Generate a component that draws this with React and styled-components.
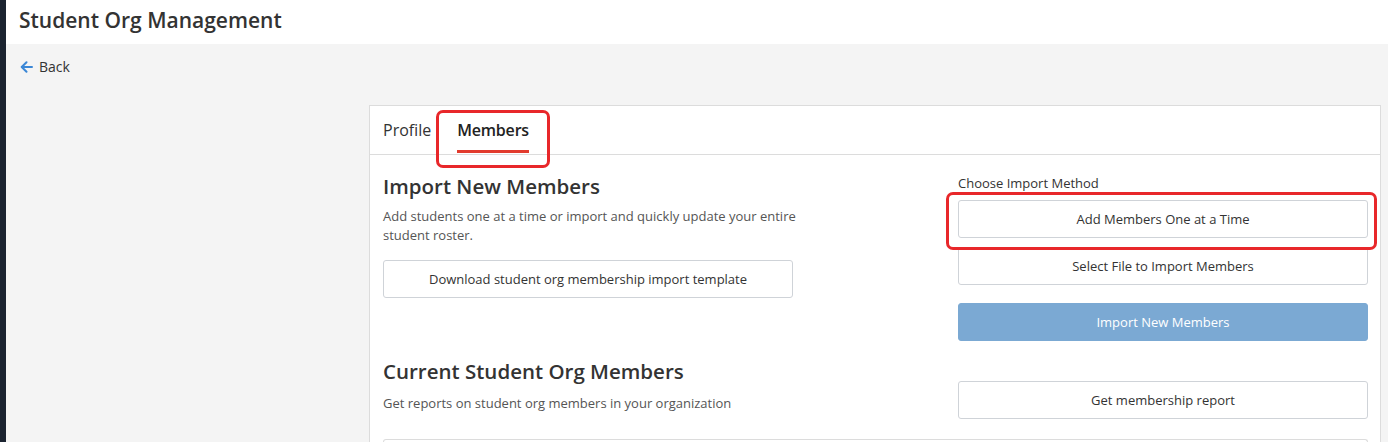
import React from 'react';
import styled, { createGlobalStyle } from 'styled-components';

const GlobalStyle = createGlobalStyle`
  html, body {
    margin: 0;
    padding: 0;
    background: #f4f4f4;
    font-family: "Open Sans", "Liberation Sans", sans-serif;
    color: #333;
  }
  * { box-sizing: border-box; }
`;

const Shell = styled.div`
  display: flex;
  width: 1388px;
  height: 442px;
  overflow: hidden;
`;

const Rail = styled.div`
  width: 6px;
  flex: none;
  background: #1b2330;
`;

const Main = styled.div`
  flex: 1;
  display: flex;
  flex-direction: column;
  background: #f4f4f4;
`;

const Header = styled.header`
  height: 44px;
  flex: none;
  display: flex;
  align-items: center;
  padding: 0 0 4px 13px;
  background: #fff;
`;

const Title = styled.h1`
  margin: 0;
  font-size: 21px;
  font-weight: 600;
  color: #333;
`;

const Content = styled.div`
  padding: 0 7px 0 363px;
  position: relative;
`;

const BackLink = styled.a`
  position: absolute;
  left: 14px;
  top: 13px;
  display: flex;
  align-items: center;
  gap: 6px;
  font-size: 14px;
  color: #333;
  text-decoration: none;
`;

const Card = styled.section`
  position: relative;
  margin-top: 61px;
  background: #fff;
  border: 1px solid #dcdcdc;
`;

const Tabs = styled.nav`
  height: 49px;
  display: flex;
  gap: 26px;
  padding: 0 13px;
  border-bottom: 1px solid #dcdcdc;
`;

const Tab = styled.div`
  position: relative;
  display: flex;
  align-items: center;
  font-size: 16px;
  font-weight: ${p => (p.$active ? 600 : 400)};
  letter-spacing: ${p => (p.$active ? '-0.2px' : '0')};
  color: ${p => (p.$active ? '#222' : '#333')};

  ${p => p.$active && `
    &::after {
      content: '';
      position: absolute;
      left: 0;
      right: 0;
      bottom: 1px;
      height: 3px;
      background: #e23b2e;
    }
  `}
`;

const Body = styled.div`
  padding: 0 12px 0 13px;
`;

const Row = styled.div`
  display: grid;
  grid-template-columns: 1fr 410px;
  column-gap: 40px;
  padding-top: ${p => p.$top}px;
`;

const Col = styled.div`
  display: flex;
  flex-direction: column;
`;

const Heading = styled.h2`
  margin: ${p => p.$mt || 0}px 0 0;
  font-size: 20.5px;
  font-weight: 600;
  line-height: 26px;
  color: #333;
`;

const Desc = styled.p`
  margin: ${p => p.$mt}px 0 0;
  max-width: 420px;
  font-size: 13px;
  line-height: 19px;
  color: #555;
`;

const Label = styled.div`
  margin-top: 1px;
  font-size: 13px;
  line-height: 16px;
  color: #333;
`;

const Button = styled.button`
  width: 410px;
  height: 38px;
  margin-top: ${p => p.$mt || 0}px;
  border: 1px solid ${p => (p.$primary ? '#7ba9d3' : '#cfd3d8')};
  border-radius: 3px;
  background: ${p => (p.$primary ? '#7ba9d3' : '#fff')};
  color: ${p => (p.$primary ? '#fff' : '#333')};
  font-family: inherit;
  font-size: 13px;
  cursor: pointer;
`;

const NextBox = styled.div`
  margin-top: 20px;
  height: 10px;
  border: 1px solid #dcdcdc;
  border-bottom: none;
  border-radius: 3px 3px 0 0;
`;

const Callout = styled.div`
  position: absolute;
  left: ${p => p.$x}px;
  top: ${p => p.$y}px;
  width: ${p => p.$w}px;
  height: ${p => p.$h}px;
  border: 3px solid #e8272a;
  border-radius: 7px;
  pointer-events: none;
`;

function ArrowLeft() {
  return (
    <svg width="13" height="12" viewBox="0 0 13 12" fill="none">
      <path d="M12 6H2M6.5 1.2L1.7 6l4.8 4.8" stroke="#3b87d6" strokeWidth="2" strokeLinecap="round" strokeLinejoin="round" />
    </svg>
  );
}

export default function App() {
  return (
    <>
      <GlobalStyle />
      <Shell>
        <Rail />
        <Main>
          <Header>
            <Title>Student Org Management</Title>
          </Header>
          <Content>
            <BackLink href="#">
              <ArrowLeft />
              Back
            </BackLink>
            <Card>
              <Tabs>
                <Tab>Profile</Tab>
                <Tab $active>Members</Tab>
              </Tabs>
              <Body>
                <Row $top={19}>
                  <Col>
                    <Heading $mt={-1}>Import New Members</Heading>
                    <Desc $mt={8}>
                      Add students one at a time or import and quickly update your entire student roster.
                    </Desc>
                    <Button $mt={15}>Download student org membership import template</Button>
                  </Col>
                  <Col>
                    <Label>Choose Import Method</Label>
                    <Button $mt={9}>Add Members One at a Time</Button>
                    <Button $mt={9}>Select File to Import Members</Button>
                    <Button $primary $mt={18}>Import New Members</Button>
                  </Col>
                </Row>
                <Row $top={17}>
                  <Col>
                    <Heading>Current Student Org Members</Heading>
                    <Desc $mt={10}>Get reports on student org members in your organization</Desc>
                  </Col>
                  <Col>
                    <Button $mt={23}>Get membership report</Button>
                  </Col>
                </Row>
                <NextBox />
              </Body>
              <Callout $x={66} $y={4} $w={114} $h={58} />
              <Callout $x={576} $y={86} $w={431} $h={58} />
            </Card>
          </Content>
        </Main>
      </Shell>
    </>
  );
}
